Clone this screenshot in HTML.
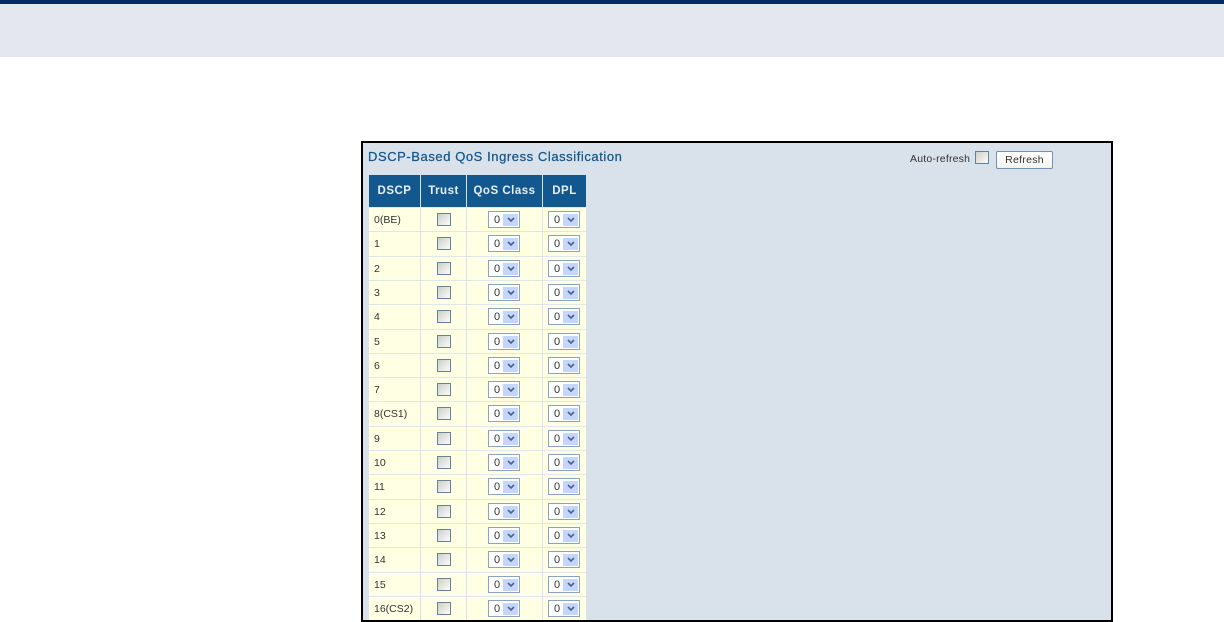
<!DOCTYPE html>
<html><head><meta charset="utf-8"><style>
html,body{margin:0;padding:0;background:#fff}
body{width:1224px;height:622px;position:relative;overflow:hidden;font-family:"Liberation Sans",sans-serif;font-size:10.5px;color:#222}
div{position:absolute;box-sizing:border-box}
#top{left:0;top:0;width:1224px;height:4px;background:#002a66}
#band{left:0;top:4px;width:1224px;height:53px;background:#e4e7ef}
#frame{left:361px;top:141px;width:752px;height:481px;background:#d9e1ea;border:2px solid #000}
#title{left:368px;top:149px;font-size:13px;line-height:16px;color:#12588e;white-space:nowrap;letter-spacing:.57px;-webkit-text-stroke:.25px #12588e}
.h{top:175px;height:32px;background:#12588e;color:#e8eef4;font-weight:bold;font-size:11.5px;line-height:32px;text-align:center;letter-spacing:.5px}
.c{height:25px;background:#ffffe4;border-top:1px solid #dfe7ea;line-height:24px;color:#333}
.l{left:369px;width:51px;padding-left:5px;white-space:nowrap}
.t{left:421px;width:45px}.q{left:467px;width:75px}.d{left:543px;width:43px}
.cb{left:16px;top:5px;width:14px;height:13px;border:1px solid #64839a;background:linear-gradient(135deg,#cfcfc9,#fbfbf8)}
.s{top:3px;width:32px;height:17px;background:#fff;border:1px solid #8aa4bd;font-size:11px;line-height:17px;padding-left:5px;color:#333}
.q .s{left:21px}.d .s{left:5px}
.a{left:14px;top:2px;width:15px;height:12px;background:#c4d6fb}
.a svg{position:absolute;left:4px;top:3px}
#ar{left:910px;top:152px;font-size:10.5px;line-height:14px;letter-spacing:.2px;white-space:nowrap;color:#333}
#arc{left:975px;top:151px;width:14px;height:13px;border:1px solid #64839a;background:linear-gradient(135deg,#cfcfc9,#fbfbf8)}
#btn{left:996px;top:151px;width:57px;height:18px;border:1px solid #6f93b3;border-radius:2px;background:linear-gradient(#fff,#f3f3ee);font-size:10.5px;line-height:16px;text-align:center;letter-spacing:.3px;color:#333}
</style></head><body>
<div id="top"></div><div id="band"></div><div id="frame"></div>
<div id="title">DSCP-Based QoS Ingress Classification</div>
<div id="ar">Auto-refresh</div><div id="arc"></div><div id="btn">Refresh</div>
<div class="h" style="left:369px;width:51px">DSCP</div>
<div class="h" style="left:421px;width:45px">Trust</div>
<div class="h" style="left:467px;width:75px">QoS Class</div>
<div class="h" style="left:543px;width:43px">DPL</div>

<div class="c l" style="top:207px">0(BE)</div><div class="c t" style="top:207px"><div class="cb"></div></div><div class="c q" style="top:207px"><div class="s">0<div class="a"><svg width="8" height="6"><path d="M1 1l3 3 3-3" fill="none" stroke="#4d6185" stroke-width="1.6"/></svg></div></div></div><div class="c d" style="top:207px"><div class="s">0<div class="a"><svg width="8" height="6"><path d="M1 1l3 3 3-3" fill="none" stroke="#4d6185" stroke-width="1.6"/></svg></div></div></div>
<div class="c l" style="top:231px">1</div><div class="c t" style="top:231px"><div class="cb"></div></div><div class="c q" style="top:231px"><div class="s">0<div class="a"><svg width="8" height="6"><path d="M1 1l3 3 3-3" fill="none" stroke="#4d6185" stroke-width="1.6"/></svg></div></div></div><div class="c d" style="top:231px"><div class="s">0<div class="a"><svg width="8" height="6"><path d="M1 1l3 3 3-3" fill="none" stroke="#4d6185" stroke-width="1.6"/></svg></div></div></div>
<div class="c l" style="top:256px">2</div><div class="c t" style="top:256px"><div class="cb"></div></div><div class="c q" style="top:256px"><div class="s">0<div class="a"><svg width="8" height="6"><path d="M1 1l3 3 3-3" fill="none" stroke="#4d6185" stroke-width="1.6"/></svg></div></div></div><div class="c d" style="top:256px"><div class="s">0<div class="a"><svg width="8" height="6"><path d="M1 1l3 3 3-3" fill="none" stroke="#4d6185" stroke-width="1.6"/></svg></div></div></div>
<div class="c l" style="top:280px">3</div><div class="c t" style="top:280px"><div class="cb"></div></div><div class="c q" style="top:280px"><div class="s">0<div class="a"><svg width="8" height="6"><path d="M1 1l3 3 3-3" fill="none" stroke="#4d6185" stroke-width="1.6"/></svg></div></div></div><div class="c d" style="top:280px"><div class="s">0<div class="a"><svg width="8" height="6"><path d="M1 1l3 3 3-3" fill="none" stroke="#4d6185" stroke-width="1.6"/></svg></div></div></div>
<div class="c l" style="top:304px">4</div><div class="c t" style="top:304px"><div class="cb"></div></div><div class="c q" style="top:304px"><div class="s">0<div class="a"><svg width="8" height="6"><path d="M1 1l3 3 3-3" fill="none" stroke="#4d6185" stroke-width="1.6"/></svg></div></div></div><div class="c d" style="top:304px"><div class="s">0<div class="a"><svg width="8" height="6"><path d="M1 1l3 3 3-3" fill="none" stroke="#4d6185" stroke-width="1.6"/></svg></div></div></div>
<div class="c l" style="top:329px">5</div><div class="c t" style="top:329px"><div class="cb"></div></div><div class="c q" style="top:329px"><div class="s">0<div class="a"><svg width="8" height="6"><path d="M1 1l3 3 3-3" fill="none" stroke="#4d6185" stroke-width="1.6"/></svg></div></div></div><div class="c d" style="top:329px"><div class="s">0<div class="a"><svg width="8" height="6"><path d="M1 1l3 3 3-3" fill="none" stroke="#4d6185" stroke-width="1.6"/></svg></div></div></div>
<div class="c l" style="top:353px">6</div><div class="c t" style="top:353px"><div class="cb"></div></div><div class="c q" style="top:353px"><div class="s">0<div class="a"><svg width="8" height="6"><path d="M1 1l3 3 3-3" fill="none" stroke="#4d6185" stroke-width="1.6"/></svg></div></div></div><div class="c d" style="top:353px"><div class="s">0<div class="a"><svg width="8" height="6"><path d="M1 1l3 3 3-3" fill="none" stroke="#4d6185" stroke-width="1.6"/></svg></div></div></div>
<div class="c l" style="top:377px">7</div><div class="c t" style="top:377px"><div class="cb"></div></div><div class="c q" style="top:377px"><div class="s">0<div class="a"><svg width="8" height="6"><path d="M1 1l3 3 3-3" fill="none" stroke="#4d6185" stroke-width="1.6"/></svg></div></div></div><div class="c d" style="top:377px"><div class="s">0<div class="a"><svg width="8" height="6"><path d="M1 1l3 3 3-3" fill="none" stroke="#4d6185" stroke-width="1.6"/></svg></div></div></div>
<div class="c l" style="top:401px">8(CS1)</div><div class="c t" style="top:401px"><div class="cb"></div></div><div class="c q" style="top:401px"><div class="s">0<div class="a"><svg width="8" height="6"><path d="M1 1l3 3 3-3" fill="none" stroke="#4d6185" stroke-width="1.6"/></svg></div></div></div><div class="c d" style="top:401px"><div class="s">0<div class="a"><svg width="8" height="6"><path d="M1 1l3 3 3-3" fill="none" stroke="#4d6185" stroke-width="1.6"/></svg></div></div></div>
<div class="c l" style="top:426px">9</div><div class="c t" style="top:426px"><div class="cb"></div></div><div class="c q" style="top:426px"><div class="s">0<div class="a"><svg width="8" height="6"><path d="M1 1l3 3 3-3" fill="none" stroke="#4d6185" stroke-width="1.6"/></svg></div></div></div><div class="c d" style="top:426px"><div class="s">0<div class="a"><svg width="8" height="6"><path d="M1 1l3 3 3-3" fill="none" stroke="#4d6185" stroke-width="1.6"/></svg></div></div></div>
<div class="c l" style="top:450px">10</div><div class="c t" style="top:450px"><div class="cb"></div></div><div class="c q" style="top:450px"><div class="s">0<div class="a"><svg width="8" height="6"><path d="M1 1l3 3 3-3" fill="none" stroke="#4d6185" stroke-width="1.6"/></svg></div></div></div><div class="c d" style="top:450px"><div class="s">0<div class="a"><svg width="8" height="6"><path d="M1 1l3 3 3-3" fill="none" stroke="#4d6185" stroke-width="1.6"/></svg></div></div></div>
<div class="c l" style="top:474px">11</div><div class="c t" style="top:474px"><div class="cb"></div></div><div class="c q" style="top:474px"><div class="s">0<div class="a"><svg width="8" height="6"><path d="M1 1l3 3 3-3" fill="none" stroke="#4d6185" stroke-width="1.6"/></svg></div></div></div><div class="c d" style="top:474px"><div class="s">0<div class="a"><svg width="8" height="6"><path d="M1 1l3 3 3-3" fill="none" stroke="#4d6185" stroke-width="1.6"/></svg></div></div></div>
<div class="c l" style="top:499px">12</div><div class="c t" style="top:499px"><div class="cb"></div></div><div class="c q" style="top:499px"><div class="s">0<div class="a"><svg width="8" height="6"><path d="M1 1l3 3 3-3" fill="none" stroke="#4d6185" stroke-width="1.6"/></svg></div></div></div><div class="c d" style="top:499px"><div class="s">0<div class="a"><svg width="8" height="6"><path d="M1 1l3 3 3-3" fill="none" stroke="#4d6185" stroke-width="1.6"/></svg></div></div></div>
<div class="c l" style="top:523px">13</div><div class="c t" style="top:523px"><div class="cb"></div></div><div class="c q" style="top:523px"><div class="s">0<div class="a"><svg width="8" height="6"><path d="M1 1l3 3 3-3" fill="none" stroke="#4d6185" stroke-width="1.6"/></svg></div></div></div><div class="c d" style="top:523px"><div class="s">0<div class="a"><svg width="8" height="6"><path d="M1 1l3 3 3-3" fill="none" stroke="#4d6185" stroke-width="1.6"/></svg></div></div></div>
<div class="c l" style="top:547px">14</div><div class="c t" style="top:547px"><div class="cb"></div></div><div class="c q" style="top:547px"><div class="s">0<div class="a"><svg width="8" height="6"><path d="M1 1l3 3 3-3" fill="none" stroke="#4d6185" stroke-width="1.6"/></svg></div></div></div><div class="c d" style="top:547px"><div class="s">0<div class="a"><svg width="8" height="6"><path d="M1 1l3 3 3-3" fill="none" stroke="#4d6185" stroke-width="1.6"/></svg></div></div></div>
<div class="c l" style="top:572px">15</div><div class="c t" style="top:572px"><div class="cb"></div></div><div class="c q" style="top:572px"><div class="s">0<div class="a"><svg width="8" height="6"><path d="M1 1l3 3 3-3" fill="none" stroke="#4d6185" stroke-width="1.6"/></svg></div></div></div><div class="c d" style="top:572px"><div class="s">0<div class="a"><svg width="8" height="6"><path d="M1 1l3 3 3-3" fill="none" stroke="#4d6185" stroke-width="1.6"/></svg></div></div></div>
<div class="c l" style="top:596px;height:24px">16(CS2)</div><div class="c t" style="top:596px;height:24px"><div class="cb"></div></div><div class="c q" style="top:596px;height:24px"><div class="s">0<div class="a"><svg width="8" height="6"><path d="M1 1l3 3 3-3" fill="none" stroke="#4d6185" stroke-width="1.6"/></svg></div></div></div><div class="c d" style="top:596px;height:24px"><div class="s">0<div class="a"><svg width="8" height="6"><path d="M1 1l3 3 3-3" fill="none" stroke="#4d6185" stroke-width="1.6"/></svg></div></div></div>
</body></html>
